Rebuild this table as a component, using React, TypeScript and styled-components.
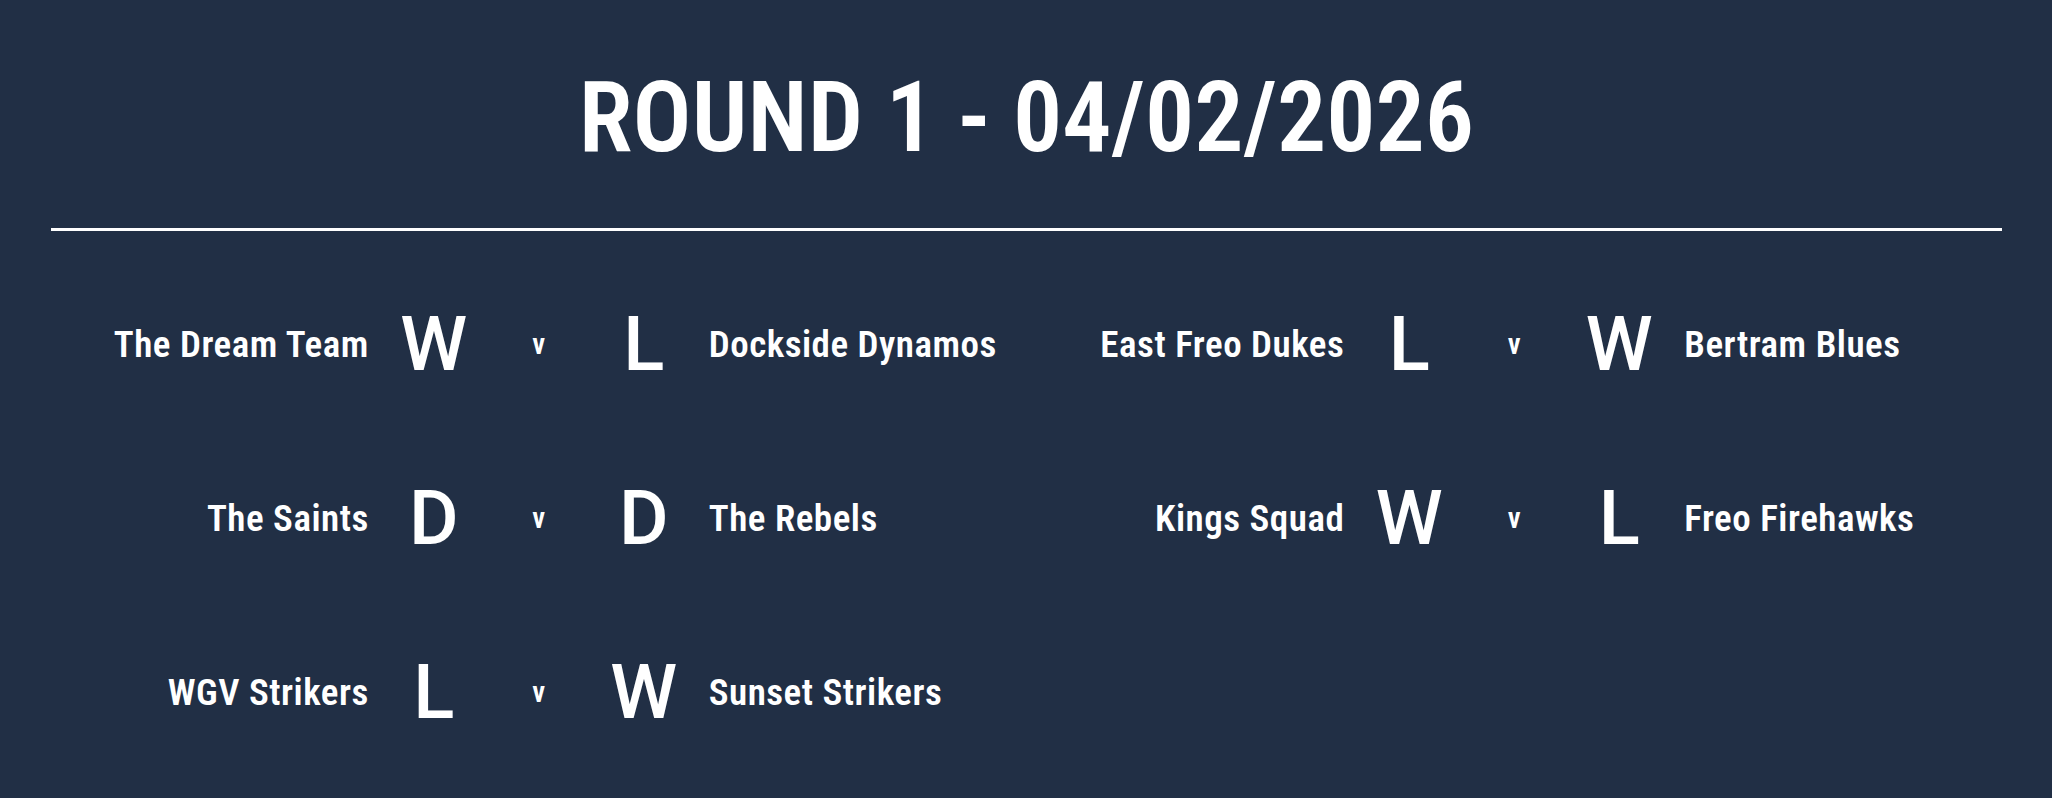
import React from "react";
import styled, { createGlobalStyle } from "styled-components";

const GlobalStyle = createGlobalStyle`
  html, body {
    margin: 0;
    padding: 0;
    background: #212f45;
    color: #ffffff;
    font-family: Roboto, "Open Sans", sans-serif;
  }
`;

const Page = styled.main`
  min-height: 798px;
  box-sizing: border-box;
  padding: 69px 50px 0 51px;
`;

const Title = styled.h1`
  margin: 0;
  text-align: center;
  font-family: Roboto, sans-serif;
  font-stretch: 75%;
  font-weight: 600;
  font-size: 98px;
  line-height: 98px;
  letter-spacing: 0;
`;

const Rule = styled.hr`
  margin: 61px 0 0;
  border: 0;
  height: 3px;
  background: #ffffff;
`;

const Fixtures = styled.section`
  margin-top: 26px;
  display: grid;
  grid-template-columns: 1fr 1fr;
  grid-auto-rows: 174px;
`;

const Match = styled.div`
  display: grid;
  grid-template-columns: 1fr 80px 80px 80px 1fr;
  column-gap: 25px;
  align-items: center;
`;

const Team = styled.span<{ $side: "home" | "away" }>`
  font-family: Roboto, sans-serif;
  font-stretch: 82%;
  font-weight: 600;
  font-size: 37px;
  line-height: 1;
  letter-spacing: 0.5px;
  white-space: nowrap;
  text-align: ${(p) => (p.$side === "home" ? "right" : "left")};
`;

const Result = styled.span`
  font-family: Roboto, sans-serif;
  font-stretch: 96%;
  font-weight: 500;
  font-size: 76px;
  line-height: 1;
  text-align: center;
`;

const Versus = styled.span`
  font-family: Roboto, sans-serif;
  font-stretch: 82%;
  font-weight: 600;
  font-size: 29px;
  line-height: 1;
  text-align: center;
`;

type Fixture = { home: string; homeRes: string; away: string; awayRes: string };

const fixtures: Fixture[] = [
  { home: "The Dream Team", homeRes: "W", away: "Dockside Dynamos", awayRes: "L" },
  { home: "East Freo Dukes", homeRes: "L", away: "Bertram Blues", awayRes: "W" },
  { home: "The Saints", homeRes: "D", away: "The Rebels", awayRes: "D" },
  { home: "Kings Squad", homeRes: "W", away: "Freo Firehawks", awayRes: "L" },
  { home: "WGV Strikers", homeRes: "L", away: "Sunset Strikers", awayRes: "W" },
];

export default function App() {
  return (
    <>
      <GlobalStyle />
      <Page>
        <Title>ROUND 1 - 04/02/2026</Title>
        <Rule />
        <Fixtures>
          {fixtures.map((f) => (
            <Match key={f.home}>
              <Team $side="home">{f.home}</Team>
              <Result>{f.homeRes}</Result>
              <Versus>v</Versus>
              <Result>{f.awayRes}</Result>
              <Team $side="away">{f.away}</Team>
            </Match>
          ))}
        </Fixtures>
      </Page>
    </>
  );
}
